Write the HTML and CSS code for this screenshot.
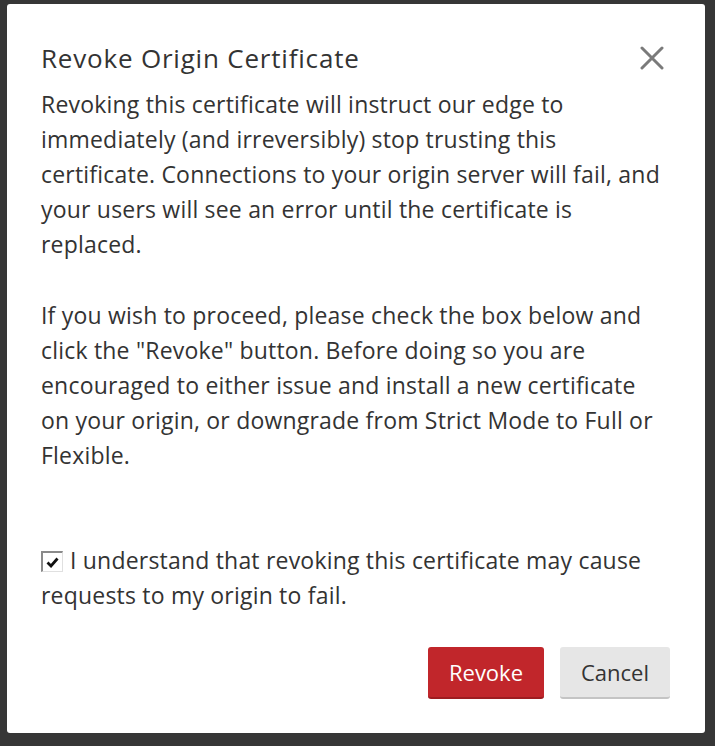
FILE: index.html
```html
<!DOCTYPE html>
<html>
<head>
<meta charset="utf-8">
<link rel="stylesheet" href="styles.css">
</head>
<body>
<div class="modal">
  <div class="modal-header">
    <h2 class="modal-title">Revoke Origin Certificate</h2>
    <button class="close" aria-label="Close">
      <svg width="24" height="24" viewBox="0 0 24 24"><path d="M2 2 L22 22 M22 2 L2 22" stroke="#7a7a7a" stroke-width="3" stroke-linecap="round" fill="none"/></svg>
    </button>
  </div>
  <div class="modal-body">
    <p class="para">Revoking this certificate will instruct our edge to immediately (and irreversibly) stop trusting this certificate. Connections to your origin server will fail, and your users will see an error until the certificate is replaced.</p>
    <p class="para">If you wish to proceed, please check the box below and click the "Revoke" button. Before doing so you are encouraged to either issue and install a new certificate on your origin, or downgrade from Strict Mode to Full or Flexible.</p>
    <label class="confirm">
      <span class="checkbox"><svg width="13" height="11" viewBox="0 0 13 11"><path d="M1.5 5.5 L5 9 L11.5 1.5" stroke="#111" stroke-width="2.8" fill="none"/></svg></span>I understand that revoking this certificate may cause requests to my origin to fail.
    </label>
  </div>
  <div class="modal-footer">
    <button class="btn btn-danger">Revoke</button>
    <button class="btn btn-default">Cancel</button>
  </div>
</div>
</body>
</html>
```
FILE: styles.css
```css
html, body {
  margin: 0;
  padding: 0;
}
body {
  background: #363636;
  height: 746px;
  overflow: hidden;
  font-family: "Open Sans", "Noto Sans", sans-serif;
  color: #333;
}
.modal {
  margin: 4px 0 0 7px;
  width: 698px;
  height: 729px;
  box-sizing: border-box;
  background: #fff;
  border-radius: 3px;
  padding: 36px 35px 0 34px;
}
.modal-header {
  display: flex;
  justify-content: space-between;
  align-items: center;
}
.modal-title {
  margin: 0;
  font-size: 26px;
  letter-spacing: 0.8px;
  line-height: 36px;
  font-weight: 400;
  color: #333;
}
.close {
  border: 0;
  background: none;
  padding: 0;
  margin-right: 6px;
  width: 24px;
  height: 24px;
  cursor: pointer;
}
.modal-body {
  margin-top: 10.5px;
  font-size: 23px;
  letter-spacing: 0.2px;
  line-height: 35px;
}
.para {
  margin: 0 0 36px 0;
}
.para + .para {
  margin-bottom: 70px;
}
.confirm {
  display: block;
}
.checkbox {
  display: inline-flex;
  align-items: center;
  justify-content: center;
  width: 22px;
  height: 21px;
  box-sizing: border-box;
  border-top: 2px solid #8a8a8a;
  border-left: 2px solid #8a8a8a;
  border-right: 1px solid #e0e0e0;
  border-bottom: 1px solid #e0e0e0;
  background: #fff;
  margin-right: 7px;
  vertical-align: 1px;
}
.modal-footer {
  display: flex;
  justify-content: flex-end;
  gap: 16px;
  margin-top: 34px;
}
.btn {
  height: 52px;
  font-family: inherit;
  font-size: 22px;
  border-radius: 3px;
  border: 0;
  padding: 0;
  cursor: pointer;
}
.btn-danger {
  width: 116px;
  background: #c1262b;
  color: #fff;
  border-bottom: 2px solid #9e1c20;
}
.btn-default {
  width: 110px;
  background: #e6e6e6;
  color: #333;
  border-bottom: 2px solid #c4c4c4;
}
```
